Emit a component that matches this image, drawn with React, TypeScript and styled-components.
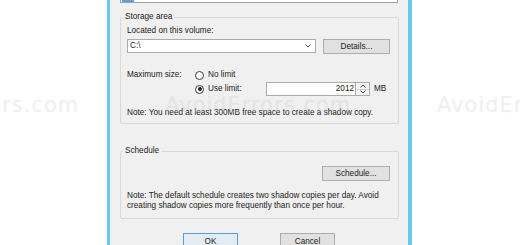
import React from 'react'
import styled, { createGlobalStyle } from 'styled-components';

const GlobalStyle = createGlobalStyle`
  html, body {
    margin: 0;
    padding: 0;
    background: #ffffff;
  }
  * {
    box-sizing: border-box;
  }
`;

const Page = styled.div`
  position: relative;
  width: 520px;
  height: 245px;
  overflow: hidden;
  background: #ffffff;
  font-family: "Liberation Sans", Arial, sans-serif;
  font-size: 8.2px;
  line-height: 10px;
  color: #222222;
`;

const Window = styled.div`
  margin-left: 107px;
  width: 305px;
  height: 245px;
  background: #f0f0f0;
  border-left: 3px solid #6cc8ea;
  border-right: 4px solid #6cc8ea;
  display: flex;
  flex-direction: column;
`;

const ListStub = styled.div`
  height: 3px;
  margin: 0 10px;
  background: #ffffff;
  border: 1px solid #9aa3ad;
  border-top: none;
`;

const ListSelection = styled.div`
  width: 12px;
  height: 2px;
  margin-left: 1px;
  background: #5e9fd8;
`;

const Group = styled.fieldset<{ $top: number; $height: number }>`
  margin: ${p => p.$top}px 9px 0 10px;
  height: ${p => p.$height}px;
  flex-shrink: 0;
  padding: 4px 8px 0 6px;
  border: 1px solid #d9d9d9;
  border-radius: 2px;
  min-width: 0;
`;

const Legend = styled.legend`
  padding: 0 2px;
  margin-left: -4px;
  line-height: 10px;
  color: #222222;
`;

const FieldLabel = styled.div``;

const ComboRow = styled.div`
  display: flex;
  align-items: flex-start;
  gap: 7px;
  margin-top: 3px;
`;

const Combo = styled.div`
  width: 189px;
  height: 14px;
  background: #ffffff;
  border: 1px solid #a9abaf;
  display: flex;
  align-items: center;
  justify-content: space-between;
  padding: 0 4px 0 2px;
`;

const Button = styled.div<{ $width: number; $primary?: boolean }>`
  width: ${p => p.$width}px;
  height: 15px;
  background: ${p => (p.$primary ? '#e3ebf3' : '#e1e1e1')};
  border: 1px solid ${p => (p.$primary ? '#5c9ed8' : '#adadad')};
  display: flex;
  align-items: center;
  justify-content: center;
  color: #222222;
`;

const MaxRow = styled.div`
  display: flex;
  margin-top: 16px;
`;

const MaxLabel = styled.div`
  width: 68px;
`;

const Options = styled.div`
  display: flex;
  flex-direction: column;
  gap: 2px;
`;

const OptionRow = styled.div`
  display: flex;
  align-items: center;
  min-height: 10px;
`;

const RadioOption = styled.div<{ $width?: number }>`
  display: flex;
  align-items: center;
  gap: 4px;
  width: ${p => (p.$width ? `${p.$width}px` : 'auto')};
`;

const RadioCircle = styled.span<{ $checked?: boolean }>`
  width: 9px;
  height: 9px;
  border-radius: 50%;
  border: 1px solid #3a3a3a;
  background: #ffffff;
  display: flex;
  align-items: center;
  justify-content: center;
  &::after {
    content: '';
    width: 4px;
    height: 4px;
    border-radius: 50%;
    background: ${p => (p.$checked ? '#222222' : 'transparent')};
  }
`;

const SpinBox = styled.div`
  display: flex;
  height: 14px;
`;

const SpinInput = styled.div`
  width: 89px;
  height: 14px;
  background: #ffffff;
  border: 1px solid #a9abaf;
  border-right: none;
  text-align: right;
  padding-right: 1px;
  line-height: 12px;
`;

const SpinButtons = styled.div`
  width: 15px;
  display: flex;
  flex-direction: column;
  border: 1px solid #a9abaf;
  background: #f4f4f4;
`;

const SpinHalf = styled.div`
  flex: 1;
  display: flex;
  align-items: center;
  justify-content: center;
  & + & {
    border-top: 1px solid #d4d4d4;
  }
`;

const Unit = styled.div`
  margin-left: 4px;
  align-self: center;
`;

const Note = styled.div<{ $top: number }>`
  margin-top: ${p => p.$top}px;
  white-space: nowrap;
`;

const RightAligned = styled.div`
  display: flex;
  justify-content: flex-end;
  margin-top: 6px;
`;

const Footer = styled.div`
  display: flex;
  justify-content: center;
  gap: 42px;
  margin-top: 14px;
`;

const FooterButton = styled(Button)`
  height: 18px;
`;

const Watermark = styled.div`
  position: absolute;
  left: -107px;
  top: 93px;
  display: flex;
  pointer-events: none;
`;

const WatermarkText = styled.span`
  width: 272px;
  flex-shrink: 0;
  font-family: "DejaVu Sans", sans-serif;
  font-size: 21px;
  line-height: 24px;
  letter-spacing: 1px;
  color: rgba(255, 255, 255, 0.25);
  text-shadow: 0 0 1px rgba(0, 0, 0, 0.09);
`;

const Chevron = ({ up }: { up?: boolean }) => (
  <svg width="6" height="4" viewBox="0 0 6 4">
    <path d={up ? 'M0.5 3.5 L3 1 L5.5 3.5' : 'M0.5 0.5 L3 3 L5.5 0.5'} fill="none" stroke="#444" strokeWidth="1" />
  </svg>
);

export default function App() {
  return (
    <Page>
      <GlobalStyle />
      <Window>
        <ListStub>
          <ListSelection />
        </ListStub>

        <Group $top={9} $height={112}>
          <Legend>Storage area</Legend>
          <FieldLabel>Located on this volume:</FieldLabel>
          <ComboRow>
            <Combo>
              <span>C:\</span>
              <Chevron />
            </Combo>
            <Button $width={67}>Details...</Button>
          </ComboRow>
          <MaxRow>
            <MaxLabel>Maximum size:</MaxLabel>
            <Options>
              <OptionRow>
                <RadioOption>
                  <RadioCircle />
                  <span>No limit</span>
                </RadioOption>
              </OptionRow>
              <OptionRow>
                <RadioOption $width={71}>
                  <RadioCircle $checked />
                  <span>Use limit:</span>
                </RadioOption>
                <SpinBox>
                  <SpinInput>2012</SpinInput>
                  <SpinButtons>
                    <SpinHalf><Chevron up /></SpinHalf>
                    <SpinHalf><Chevron /></SpinHalf>
                  </SpinButtons>
                </SpinBox>
                <Unit>MB</Unit>
              </OptionRow>
            </Options>
          </MaxRow>
          <Note $top={12}>Note: You need at least 300MB free space to create a shadow copy.</Note>
        </Group>

        <Group $top={22} $height={73}>
          <Legend>Schedule</Legend>
          <RightAligned>
            <Button $width={68}>Schedule...</Button>
          </RightAligned>
          <Note $top={10}>
            Note: The default schedule creates two shadow copies per day. Avoid
            <br />
            creating shadow copies more frequently than once per hour.
          </Note>
        </Group>

        <Footer>
          <FooterButton $width={55} $primary>OK</FooterButton>
          <FooterButton $width={55}>Cancel</FooterButton>
        </Footer>
      </Window>
      <Watermark>
        <WatermarkText>AvoidErrors.com</WatermarkText>
        <WatermarkText>AvoidErrors.com</WatermarkText>
        <WatermarkText>AvoidErrors.com</WatermarkText>
      </Watermark>
    </Page>
  )
}
